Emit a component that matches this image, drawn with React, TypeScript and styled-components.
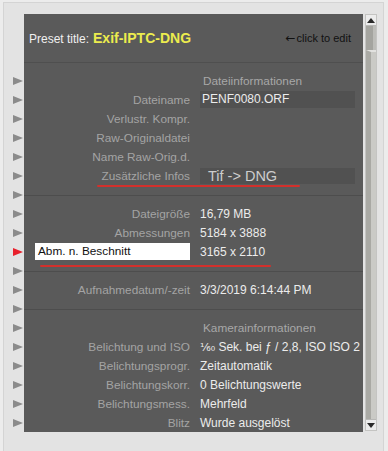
import React from 'react';
import styled, { createGlobalStyle } from 'styled-components';

const GlobalStyle = createGlobalStyle`
  body {
    margin: 0;
    background: #ececec;
    font-family: 'Liberation Sans', Arial, sans-serif;
  }
`;

const Frame = styled.div`
  margin: 2px 4px 0 3px;
  height: 460px;
  border: 1px solid #d4d4d4;
  background: #e3e3e3;
  display: flex;
  align-items: flex-start;
  padding-right: 6px;
`;

const Gutter = styled.div`
  width: 20px;
  padding-top: 68px;
  display: flex;
  flex-direction: column;
`;

const MarkerSlot = styled.div`
  height: 19px;
  display: flex;
  align-items: center;
  justify-content: flex-end;
  padding-right: 1px;
`;

const Marker = styled.span<{ $active?: boolean }>`
  width: 0;
  height: 0;
  border-top: 4.5px solid transparent;
  border-bottom: 4.5px solid transparent;
  border-left: 10px solid ${(p) => (p.$active ? '#e8202c' : '#8b8b8b')};
`;

const Panel = styled.div`
  margin-top: 11px;
  width: 339px;
  height: 418px;
  background: #5a5a5a;
  overflow: hidden;
`;

const Header = styled.div`
  height: 49px;
  box-sizing: border-box;
  border-bottom: 1px solid #4f4f4f;
  display: flex;
  align-items: center;
  justify-content: space-between;
  padding: 0 12px 0 5px;
`;

const Title = styled.div`
  color: #f0f0f0;
  font-size: 12px;
  display: flex;
  align-items: baseline;
  gap: 4px;
`;

const TitleName = styled.span`
  color: #ecec4e;
  font-size: 14px;
  font-weight: bold;
`;

const EditHint = styled.div`
  color: #111;
  font-size: 11px;
  display: flex;
  align-items: center;
  gap: 1px;
`;

const Arrow = styled.span`
  font-family: 'DejaVu Sans', sans-serif;
  font-size: 12px;
`;

const Rows = styled.div`
  padding-top: 8px;
`;

const Row = styled.div`
  position: relative;
  height: 19px;
  display: grid;
  grid-template-columns: 166px 155px;
  column-gap: 10px;
  align-items: center;
`;

const Label = styled.div<{ $highlight?: boolean }>`
  font-size: 11.8px;
  color: ${(p) => (p.$highlight ? '#111' : '#a4a4a4')};
  text-align: ${(p) => (p.$highlight ? 'left' : 'right')};
  white-space: nowrap;
  ${(p) =>
    p.$highlight &&
    `
    background: #fff;
    height: 17px;
    line-height: 17px;
    margin-left: 11px;
    padding-left: 3px;
  `}
`;

const Value = styled.div<{ $boxed?: boolean; $large?: boolean }>`
  font-size: 12px;
  color: #ececec;
  white-space: nowrap;
  ${(p) =>
    p.$boxed &&
    `
    background: #515151;
    height: 17px;
    line-height: 17px;
    padding-left: 2px;
  `}
  ${(p) =>
    p.$large &&
    `
    color: #cdcdcd;
    font-size: 14.5px;
    height: 16px;
    line-height: 16px;
    padding-left: 8px;
  `}
`;

const SectionTitle = styled.div`
  grid-column: 2;
  color: #a8a8a8;
  font-size: 11.8px;
  padding-left: 3px;
  white-space: nowrap;
`;

const Divider = styled.div`
  height: 19px;
  position: relative;
  &::after {
    content: '';
    position: absolute;
    left: 0;
    right: 0;
    top: 10px;
    height: 1px;
    background: #4d4d4d;
  }
`;

const Underline = styled.span<{ $top: number; $left: number; $width: number }>`
  position: absolute;
  top: ${(p) => p.$top}px;
  left: ${(p) => p.$left}px;
  width: ${(p) => p.$width}px;
  height: 2px;
  border-radius: 1px;
  background: #d2302c;
`;

const Fraction = styled.span`
  font-family: 'DejaVu Sans', sans-serif;
  font-size: 11px;
`;

const Scrollbar = styled.div`
  margin: 11px 0 0 2px;
  width: 12px;
  height: 417px;
  display: flex;
  flex-direction: column;
  background: #d8d8d6;
  box-sizing: border-box;
  border: 1px solid #c4c4c2;
`;

const ScrollButton = styled.div<{ $down?: boolean }>`
  height: 10px;
  background: #ececec;
  display: flex;
  align-items: center;
  justify-content: center;
  border-${(p) => (p.$down ? 'top' : 'bottom')}: 1px solid #b8b8b6;
  &::before {
    content: '';
    width: 0;
    height: 0;
    border-left: 4px solid transparent;
    border-right: 4px solid transparent;
    ${(p) =>
      p.$down ? 'border-top: 5px solid #2a2a2a;' : 'border-bottom: 5px solid #2a2a2a;'}
  }
`;

const Track = styled.div`
  flex: 1;
  display: flex;
  flex-direction: column;
`;

const Thumb = styled.div`
  height: 24px;
  background: #a4a49f;
  border-right: 3px solid #bdbdb9;
`;

const TrackRest = styled.div`
  flex: 1;
  background: #cacac6;
  border-left: 5px solid #a9a9a4;
  border-top: 2px solid #e2e2e0;
`;

type Item =
  | { kind: 'section'; title: string }
  | { kind: 'divider' }
  | {
      kind: 'row';
      label: string;
      value?: React.ReactNode;
      boxed?: boolean;
      large?: boolean;
      highlight?: boolean;
      underline?: { top: number; left: number; width: number };
    };

const items: Item[] = [
  { kind: 'section', title: 'Dateiinformationen' },
  { kind: 'row', label: 'Dateiname', value: 'PENF0080.ORF', boxed: true },
  { kind: 'row', label: 'Verlustr. Kompr.' },
  { kind: 'row', label: 'Raw-Originaldatei' },
  { kind: 'row', label: 'Name Raw-Orig.d.' },
  {
    kind: 'row',
    label: 'Zusätzliche Infos',
    value: 'Tif -> DNG',
    boxed: true,
    large: true,
    underline: { top: 19, left: 73, width: 203 },
  },
  { kind: 'divider' },
  { kind: 'row', label: 'Dateigröße', value: '16,79 MB' },
  { kind: 'row', label: 'Abmessungen', value: '5184 x 3888' },
  {
    kind: 'row',
    label: 'Abm. n. Beschnitt',
    value: '3165 x 2110',
    highlight: true,
    underline: { top: 23, left: 16, width: 231 },
  },
  { kind: 'divider' },
  { kind: 'row', label: 'Aufnahmedatum/-zeit', value: '3/3/2019 6:14:44 PM' },
  { kind: 'divider' },
  { kind: 'section', title: 'Kamerainformationen' },
  {
    kind: 'row',
    label: 'Belichtung und ISO',
    value: (
      <>
        <Fraction>¹⁄₆₀</Fraction> Sek. bei ƒ / 2,8, ISO ISO 2
      </>
    ),
  },
  { kind: 'row', label: 'Belichtungsprogr.', value: 'Zeitautomatik' },
  { kind: 'row', label: 'Belichtungskorr.', value: '0 Belichtungswerte' },
  { kind: 'row', label: 'Belichtungsmess.', value: 'Mehrfeld' },
  { kind: 'row', label: 'Blitz', value: 'Wurde ausgelöst' },
];

export default function App() {
  return (
    <>
      <GlobalStyle />
      <Frame>
        <Gutter>
          {Array.from({ length: 19 }).map((_, i) => (
            <MarkerSlot key={i}>
              <Marker $active={i === 9} />
            </MarkerSlot>
          ))}
        </Gutter>
        <Panel>
          <Header>
            <Title>
              Preset title: <TitleName>Exif-IPTC-DNG</TitleName>
            </Title>
            <EditHint>
              <Arrow>←</Arrow>click to edit
            </EditHint>
          </Header>
          <Rows>
            {items.map((item, i) => {
              if (item.kind === 'divider') return <Divider key={i} />;
              if (item.kind === 'section')
                return (
                  <Row key={i}>
                    <SectionTitle>{item.title}</SectionTitle>
                  </Row>
                );
              return (
                <Row key={i}>
                  <Label $highlight={item.highlight}>{item.label}</Label>
                  <Value $boxed={item.boxed} $large={item.large}>
                    {item.value}
                  </Value>
                  {item.underline && (
                    <Underline
                      $top={item.underline.top}
                      $left={item.underline.left}
                      $width={item.underline.width}
                    />
                  )}
                </Row>
              );
            })}
          </Rows>
        </Panel>
        <Scrollbar>
          <ScrollButton />
          <Track>
            <Thumb />
            <TrackRest />
          </Track>
          <ScrollButton $down />
        </Scrollbar>
      </Frame>
    </>
  );
}
